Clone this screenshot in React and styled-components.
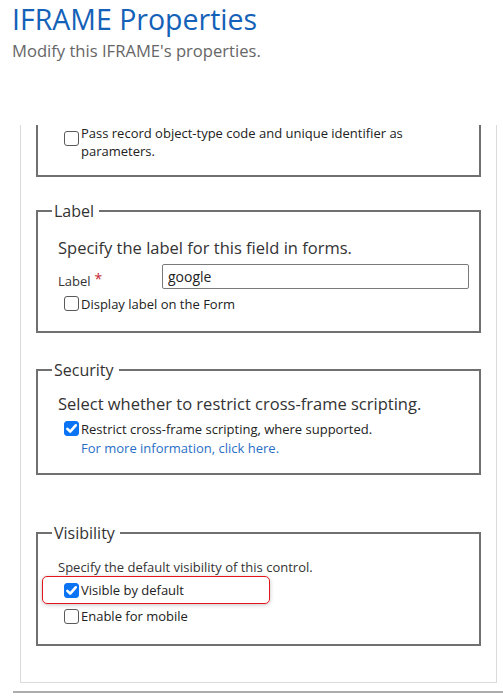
import React from 'react'
import styled, { createGlobalStyle } from 'styled-components'

const GlobalStyle = createGlobalStyle`
  body {
    margin: 0;
    background: #fff;
    font-family: 'Open Sans', 'Noto Sans', sans-serif;
    color: #333;
  }
`

const Page = styled.div`
  width: 503px;
  height: 696px;
  overflow: hidden;
`
const Header = styled.header`
  padding-left: 12px;
`
const Title = styled.h1`
  margin: 0;
  font-size: 28.5px;
  line-height: 39px;
  font-weight: 400;
  color: #1461b8;
`
const Subtitle = styled.p`
  margin: 2px 0 0;
  font-size: 16.6px;
  line-height: 20px;
  color: #666;
`
const Viewport = styled.div`
  margin: 64px 0 0 20px;
  width: 477px;
  height: 558px;
  box-sizing: border-box;
  border: 1px solid #dadada;
  border-top: none;
  overflow: hidden;
  display: flex;
  flex-direction: column;
  justify-content: flex-end;
  padding: 0 15px 36px;
`
const Section = styled.fieldset`
  flex-shrink: 0;
  margin: ${p => p.$gap || 0}px 0 0;
  padding: 0;
  min-width: 0;
  border: 2px solid #707070;
`
const Legend = styled.legend`
  margin-left: 14px;
  padding: 0 5px 0 2px;
  font-size: 16px;
  line-height: 20px;
  color: #333;
`
const Body = styled.div`
  padding: ${p => p.$top}px 10px ${p => p.$bottom}px 20px;
`
const Desc = styled.p`
  margin: 0;
  font-size: ${p => (p.$small ? 13 : 16.5)}px;
  line-height: ${p => (p.$small ? 18 : 20)}px;
  color: #333;
`
const Option = styled.label`
  display: flex;
  align-items: ${p => (p.$wrap ? 'flex-start' : 'center')};
  margin-top: ${p => p.$gap || 0}px;
  font-size: 13px;
  line-height: ${p => (p.$wrap ? 18 : 20)}px;
  color: #222;
`
const Box = styled.span`
  flex-shrink: 0;
  display: flex;
  align-items: center;
  justify-content: center;
  width: 15px;
  height: 15px;
  box-sizing: border-box;
  margin: ${p => p.$top || 0}px 2px 0 6px;
  border-radius: 3px;
  border: 1px solid ${p => (p.$checked ? '#0b74f5' : '#5a5a5a')};
  background: ${p => (p.$checked ? '#0b74f5' : '#fff')};
`
const FieldRow = styled.div`
  display: flex;
  align-items: flex-end;
  margin-top: 6px;
`
const FieldLabel = styled.span`
  flex-shrink: 0;
  width: 104px;
  font-size: 13px;
  line-height: 16px;
  color: #333;
`
const Required = styled.span`
  margin-left: 4px;
  vertical-align: top;
  font-size: 14px;
  line-height: 12px;
  color: #c4262e;
`
const TextInput = styled.input`
  flex-shrink: 0;
  width: 307px;
  height: 25px;
  box-sizing: border-box;
  padding: 0 5px;
  border: 1px solid #7a7a7a;
  border-radius: 2px;
  font: 14px 'Open Sans', sans-serif;
  color: #222;
  outline: none;
`
const MoreLink = styled.a`
  display: block;
  padding-left: 23px;
  font-size: 13px;
  line-height: 18px;
  color: #2a6fc6;
  text-decoration: none;
`
const Highlighted = styled.div`
  position: relative;
  margin-top: 4.5px;
`
const Ring = styled.span`
  position: absolute;
  left: -16px;
  top: -4.5px;
  width: 228px;
  height: 28px;
  box-sizing: border-box;
  border: 1.5px solid #e3151a;
  border-radius: 5px;
  box-shadow: 0 1px 4px rgba(0, 0, 0, 0.22);
  pointer-events: none;
`
const Divider = styled.div`
  margin: 8px 0 0 13px;
  height: 2px;
  background: #adadad;
`

const Checkbox = ({ checked, top }) => (
  <Box $checked={checked} $top={top}>
    {checked && (
      <svg width="11" height="11" viewBox="0 0 11 11">
        <path d="M1.4 5.8 L4.2 8.6 L9.7 2.3" fill="none" stroke="#fff" strokeWidth="2.6" strokeLinecap="round" strokeLinejoin="round" />
      </svg>
    )}
  </Box>
)

const App = () => (
  <Page>
    <GlobalStyle />
    <Header>
      <Title>IFRAME Properties</Title>
      <Subtitle>Modify this IFRAME's properties.</Subtitle>
    </Header>
    <Viewport>
      {/* top of this section is scrolled out of view */}
      <Section>
        <Body $top={40} $bottom={15}>
          <Option $wrap>
            <Checkbox top={7} />
            <span>
              Pass record object-type code and unique identifier as
              <br />
              parameters.
            </span>
          </Option>
        </Body>
      </Section>

      <Section $gap={24}>
        <Legend>Label</Legend>
        <Body $top={17} $bottom={17}>
          <Desc>Specify the label for this field in forms.</Desc>
          <FieldRow>
            <FieldLabel>
              Label<Required>*</Required>
            </FieldLabel>
            <TextInput defaultValue="google" />
          </FieldRow>
          <Option $gap={5}>
            <Checkbox />
            Display label on the Form
          </Option>
        </Body>
      </Section>

      <Section $gap={27}>
        <Legend>Security</Legend>
        <Body $top={14} $bottom={16}>
          <Desc>Select whether to restrict cross-frame scripting.</Desc>
          <Option $gap={5}>
            <Checkbox checked />
            Restrict cross-frame scripting, where supported.
          </Option>
          <MoreLink href="#">For more information, click here.</MoreLink>
        </Body>
      </Section>

      <Section $gap={48}>
        <Legend>Visibility</Legend>
        <Body $top={15} $bottom={18}>
          <Desc $small>Specify the default visibility of this control.</Desc>
          <Highlighted>
            <Ring />
            <Option>
              <Checkbox checked />
              Visible by default
            </Option>
          </Highlighted>
          <Option $gap={6}>
            <Checkbox />
            Enable for mobile
          </Option>
        </Body>
      </Section>
    </Viewport>
    <Divider />
  </Page>
)

export default App
